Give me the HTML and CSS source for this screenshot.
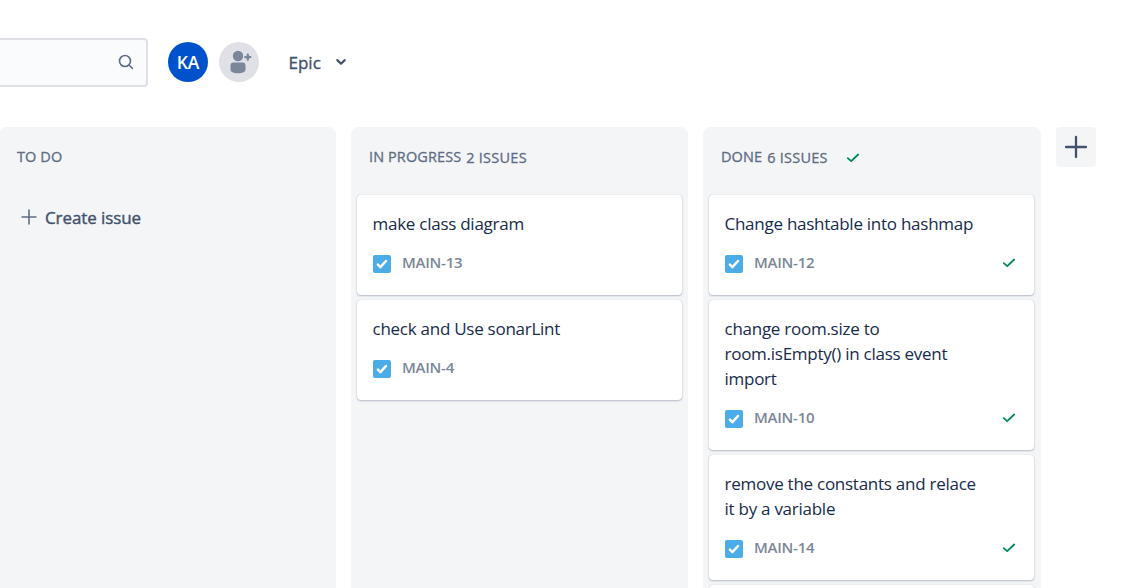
FILE: index.html
```html
<!DOCTYPE html>
<html lang="en">
<head>
<meta charset="utf-8">
<title>Board</title>
<link rel="stylesheet" href="styles.css">
</head>
<body>
<svg class="defs" width="0" height="0">
  <symbol id="task" viewBox="0 0 18 18"><rect width="18" height="18" rx="2" fill="#4bade8"/><path d="M4.900 9.700l2.500 2.500L13 6" fill="none" stroke="#fff" stroke-width="2.500" stroke-linecap="round" stroke-linejoin="round"/></symbol>
  <symbol id="tick" viewBox="0 0 14 10"><path d="M1.8 5.2l3.400 3L12.200 1.500" fill="none" stroke="#00875a" stroke-width="1.800" stroke-linecap="round" stroke-linejoin="round"/></symbol>
</svg>
<header class="toolbar">
  <div class="search">
    <svg width="18" height="18" viewBox="0 0 18 18" fill="none" stroke="#5e6c84" stroke-width="1.600" stroke-linecap="round"><circle cx="8" cy="8" r="5.500"/><path d="M12.200 12.200l3.300 3.300"/></svg>
  </div>
  <div class="avatar"><span class="initials">KA</span></div>
  <div class="avatar invite">
    <svg width="40" height="40" viewBox="0 0 40 40" fill="#7a869a"><circle cx="19" cy="14" r="5.200"/><path d="M14.500 20.500h9a3 3 0 0 1 3 3v4c0 2.500-3 3.700-7.500 3.700s-7.500-1.200-7.500-3.700v-4a3 3 0 0 1 3-3z"/><path d="M28.800 12.700v5M26.300 15.200h5" stroke="#7a869a" stroke-width="2.300" stroke-linecap="round"/></svg>
  </div>
  <div class="filter"><span class="epic">Epic</span>
    <svg width="12" height="8" viewBox="0 0 12 8"><path d="M2.300 2.100L6 5.700l3.700-3.600" fill="none" stroke="#42526e" stroke-width="2.200" stroke-linecap="round" stroke-linejoin="round"/></svg>
  </div>
</header>
<main class="board">
  <section class="column">
    <h2 class="heading"><span class="name">TO DO</span></h2>
    <div class="create">
      <svg width="16" height="16" viewBox="0 0 16 16"><path d="M8 .5v15M.5 8h15" stroke="#5e6c84" stroke-width="1.600"/></svg>
      <span class="create-text">Create issue</span>
    </div>
  </section>
  <section class="column">
    <h2 class="heading"><span class="name">IN PROGRESS</span><span class="count">2 ISSUES</span></h2>
    <article class="card"><p class="title">make class diagram</p><div class="meta"><svg class="task"><use href="#task"/></svg><span class="key">MAIN-13</span></div></article>
    <article class="card"><p class="title">check and Use sonarLint</p><div class="meta"><svg class="task"><use href="#task"/></svg><span class="key">MAIN-4</span></div></article>
  </section>
  <section class="column column-done">
    <h2 class="heading"><span class="name">DONE</span><span class="count">6 ISSUES</span><svg class="tick"><use href="#tick"/></svg></h2>
    <article class="card"><p class="title">Change hashtable into hashmap</p><div class="meta"><svg class="task"><use href="#task"/></svg><span class="key">MAIN-12</span><svg class="tick"><use href="#tick"/></svg></div></article>
    <article class="card"><p class="title">change room.size to<br>room.isEmpty() in class event<br>import</p><div class="meta"><svg class="task"><use href="#task"/></svg><span class="key">MAIN-10</span><svg class="tick"><use href="#tick"/></svg></div></article>
    <article class="card"><p class="title">remove the constants and relace<br>it by a variable</p><div class="meta"><svg class="task"><use href="#task"/></svg><span class="key">MAIN-14</span><svg class="tick"><use href="#tick"/></svg></div></article>
    <article class="card"></article>
  </section>
  <button class="add" aria-label="Add column"><svg width="24" height="24" viewBox="0 0 24 24"><path d="M12 2v20M2 12h20" stroke="#42526e" stroke-width="2.300" stroke-linecap="round"/></svg></button>
</main>
</body>
</html>
```
FILE: styles.css
```css
* { box-sizing: border-box; }
body { margin: 0; height: 588px; overflow: hidden; background: #fff; color: #172b4d; font-family: "Open Sans", "Noto Sans", sans-serif; }
.defs { display: block; }
.toolbar { display: flex; align-items: center; height: 127px; padding-bottom: 3px; }
.search { display: flex; align-items: center; justify-content: flex-end; width: 153px; height: 49px; margin-left: -5px; padding-right: 11px; background: #fafbfc; border: 2px solid #dfe1e6; border-radius: 4px; }
.avatar { display: flex; align-items: center; justify-content: center; width: 40px; height: 40px; margin-left: 20px; border-radius: 50%; background: #0052cc; color: #fff; font-size: 17.5px; font-weight: 600; }
.initials { margin-top: -1px; }
.invite { margin-left: 11px; background: #dfe1e6; }
.filter { display: flex; align-items: center; gap: 14px; margin-left: 29.5px; color: #42526e; font-size: 17px; -webkit-text-stroke: .35px #42526e; }
.board { display: flex; align-items: flex-start; gap: 15px; margin-left: -1px; }
.column { flex: none; width: 337px; height: 480px; overflow: hidden; padding: 0 6px; background: #f4f5f7; border-radius: 8px; }
.column-done { width: 338px; padding-right: 7px; }
.heading { display: flex; align-items: center; height: 68px; margin: 0; padding: 0 0 8px 12px; color: #5e6c84; font-size: 14.5px; font-weight: 400; -webkit-text-stroke: .3px #5e6c84; }
.name { margin-top: -1px; letter-spacing: .1px; }
.count { margin: 1px 0 0 5px; letter-spacing: .25px; }
.heading .tick { margin: 2px 0 0 18px; }
.create { display: flex; align-items: center; gap: 8px; height: 44px; padding-left: 16px; color: #42526e; font-size: 17px; letter-spacing: -.1px; -webkit-text-stroke: .4px #42526e; }
.card { min-height: 100px; margin-bottom: 5px; padding: 16px 16px 22px; background: #fff; border-radius: 4px; box-shadow: 0 1px 2px rgba(9,30,66,.25), 0 0 1px rgba(9,30,66,.2); }
.title { margin: 0 0 0 -.5px; font-size: 17px; font-weight: 400; letter-spacing: -.26px; line-height: 25px; white-space: nowrap; }
.meta { display: flex; align-items: center; height: 18px; margin-top: 19px; color: #7a869a; font-size: 15px; font-weight: 600; letter-spacing: -.25px; }
.task { width: 18px; height: 18px; flex: none; }
.key { margin: -4px 0 0 11px; }
.tick { width: 14px; height: 10px; flex: none; }
.meta .tick { margin: -2px 2px 0 auto; }
.add { display: flex; align-items: center; justify-content: center; width: 40px; height: 40px; padding: 0; border: 0; border-radius: 4px; background: #f4f5f7; }
```
